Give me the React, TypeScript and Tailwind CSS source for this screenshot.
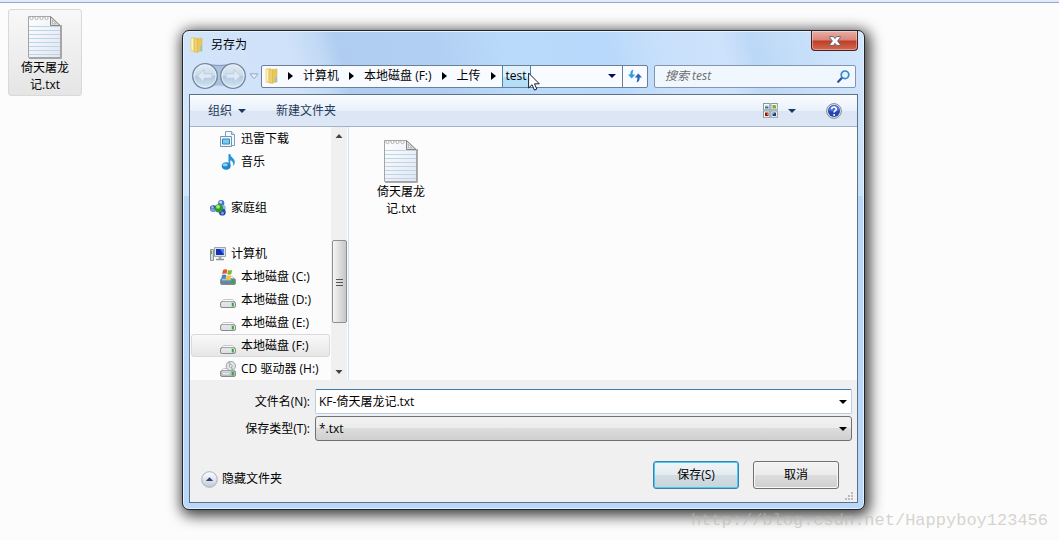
import React, { useState } from 'react';
import clsx from 'clsx';

type IconProps = { className?: string };

const NotepadIcon = ({ className }: IconProps) => (
  <svg viewBox="0 0 34 44" className={className} aria-hidden="true">
    <defs>
      <linearGradient id="paper" x1="0" y1="0" x2="1" y2="1">
        <stop offset="0" stopColor="#ffffff" />
        <stop offset="1" stopColor="#e0e5f3" />
      </linearGradient>
    </defs>
    <path d="M1 43h32V10" fill="none" stroke="#8f8f8f" strokeWidth="1.500" />
    <path d="M.5 1.500h22l10 9.500v31.500H.5z" fill="url(#paper)" stroke="#a4a4a4" />
    {[11.5, 15.5, 19.5, 23.5, 27.5, 31.5, 35.5, 39.5].map(y => (
      <path key={y} d={`M1 ${y}h31`} stroke="#bdd6e6" />
    ))}
    {[3.5, 8.5, 13.5, 18.5].map(x => (
      <circle key={x} cx={x} cy="3" r="1.600" fill="#fff" stroke="#a0a0a0" strokeWidth=".8" />
    ))}
    <path d="M22.500 1.500V10.500H32z" fill="#dcdcdc" stroke="#7d7d7d" strokeWidth=".9" />
    <path d="M24.500 5.500v3.200h3.300z" fill="#fff" stroke="#8b8b8b" strokeWidth=".5" />
  </svg>
);

const FolderIcon = ({ className }: IconProps) => (
  <svg viewBox="0 0 16 16" className={className} aria-hidden="true">
    <path d="M8 1.500l5-.5v13l-5 1z" fill="#e8c75c" stroke="#dcbb58" strokeWidth=".6" />
    <path d="M2 1l5-.5V15l-5-1z" fill="#f8e694" stroke="#e0c463" strokeWidth=".6" />
    <path d="M5 1.500L8.500 2v13.500l-3.500-1z" fill="#edd070" stroke="#d9b64e" strokeWidth=".6" />
    <path d="M3.200 2v11" stroke="#fffbd9" />
    <path d="M11.500 9h1.500v5h-1.500z" fill="#7cc5ee" />
  </svg>
);

const DownloadsIcon = ({ className }: IconProps) => (
  <svg viewBox="0 0 16 16" className={className} aria-hidden="true">
    <path d="M5.500.5h6l3 3v11h-9z" fill="#f4f9fd" stroke="#7e9fb9" />
    <path d="M11.500.5v3h3" fill="#d6e6f2" stroke="#7e9fb9" />
    <path d="M.5 5.500h11v10H.5z" fill="#eef6fc" stroke="#7397b3" />
    <path d="M2.500 8h7v5h-7z" fill="#7cc8f0" stroke="#2f86bd" />
  </svg>
);

const MusicIcon = ({ className }: IconProps) => (
  <svg viewBox="0 0 16 16" className={className} aria-hidden="true">
    <path d="M8.500 0h1.800c0 3.200 4.500 4.200 4.500 8 0 2-.8 3-1.600 4 .6-3.200-.6-5-2.900-5.800V12H8.500z" fill="#2794d9" />
    <ellipse cx="6.200" cy="12" rx="4.500" ry="3.800" fill="#1f86cb" />
    <ellipse cx="5.200" cy="10.800" rx="2.600" ry="1.600" fill="#84d4f7" />
  </svg>
);

const HomegroupIcon = ({ className }: IconProps) => (
  <svg viewBox="0 0 16 16" className={className} aria-hidden="true">
    <circle cx="11.200" cy="3.200" r="3.100" fill="#4a77ca" />
    <circle cx="3.300" cy="8.500" r="3.300" fill="#2c4cb4" />
    <circle cx="12.800" cy="8" r="3" fill="#8ab8e8" />
    <circle cx="12.300" cy="12.200" r="3.400" fill="#2b49ad" />
    <path d="M0 8.500a3.300 3.300 0 0 0 6.600 0z" fill="#7f9be0" />
    <circle cx="8.800" cy="8.200" r="4.200" fill="#2c9a2a" />
    <circle cx="8" cy="6.800" r="2" fill="#a5e67c" />
    <circle cx="10.700" cy="2.200" r="1.300" fill="#c9e0fa" />
    <circle cx="2.500" cy="7.300" r="1.200" fill="#a9c1f2" />
    <circle cx="12.500" cy="13.200" r="1.400" fill="#7d9df0" />
  </svg>
);

const ComputerIcon = ({ className }: IconProps) => (
  <svg viewBox="0 0 16 16" className={className} aria-hidden="true">
    <path d="M.5 3.500h3v11h-3z" fill="#d5d8da" stroke="#8d9396" />
    <path d="M1.500 5v3" stroke="#3fae3a" />
    <path d="M4.500 1.500h11v9h-11z" fill="#dfe2e6" stroke="#a0a5ab" />
    <path d="M6 3h8v6H6z" fill="#1230b8" />
    <path d="M10 3h4v6z" fill="#4c86ea" />
    <path d="M8.500 11h3v2h-3z" fill="#a9aeb2" />
    <path d="M6 13.500h8" stroke="#8f9599" strokeWidth="1.500" />
  </svg>
);

const DriveBody = ({ color = '#dfe1e6' }: { color?: string }) => (
  <>
    <path d="M3.500 7.500h9l3 3H.5z" fill="#fafafb" stroke="#b9bbbf" strokeWidth=".8" />
    <rect x=".5" y="9.800" width="15" height="5.700" rx="1.600" fill={color} stroke="#85888d" />
    <path d="M2 10.800h9" stroke="#fff" strokeOpacity=".7" />
    <path d="M12.800 11v3.500" stroke="#2fae2b" strokeWidth="2" />
  </>
);

const DriveIcon = ({ className }: IconProps) => (
  <svg viewBox="0 0 16 16" className={className} aria-hidden="true">
    <DriveBody />
  </svg>
);

const SystemDriveIcon = ({ className }: IconProps) => (
  <svg viewBox="0 0 16 16" className={className} aria-hidden="true">
    <DriveBody color="#5f8b9b" />
    <path d="M3 1C4.500-.2 6 0 7.300.7L6.500 5C5.200 4.300 3.700 4.400 2.200 5.200z" fill="#e8552a" />
    <path d="M8 1c1.300.7 2.800.6 4.200-.2L11.300 5c-1.400.9-2.700 1-4 .3z" fill="#7ab929" />
    <path d="M2 6c1.500-.8 3-.8 4.300-.1L5.500 10c-1.300-.7-2.800-.6-4.200.2z" fill="#3a87d8" />
    <path d="M7 6.200c1.300.7 2.600.6 4-.2l-.8 4.200c-1.400.8-2.800.9-4 .2z" fill="#f7c32c" />
  </svg>
);

const CdDriveIcon = ({ className }: IconProps) => (
  <svg viewBox="0 0 16 16" className={className} aria-hidden="true">
    <DriveBody color="#b9bcc1" />
    <path d="M2.500 12.800h7" stroke="#fff" />
    <circle cx="10.800" cy="5" r="4.700" fill="#e1e4e8" stroke="#8b9095" strokeWidth=".8" />
    <path d="M10.800 5L7.500 1.800A4.300 4.300 0 0 1 10.300.8zM10.800 5l3 3.200a4.300 4.300 0 0 1-2.500 1z" fill="#9fc7b1" />
    <circle cx="10.800" cy="5" r="1.400" fill="#fff" stroke="#777" strokeWidth=".6" />
  </svg>
);

const CaretRight = () => (
  <svg viewBox="0 0 5 8" className="h-2 w-[5px]" aria-hidden="true">
    <path d="M0 0l5 4-5 4z" fill="#000" />
  </svg>
);

const CaretDown = ({ className }: IconProps) => (
  <svg viewBox="0 0 8 4" className={clsx('h-1 w-2', className)} aria-hidden="true">
    <path d="M0 0h8L4 4z" fill="currentColor" />
  </svg>
);

const ScrollCaret = ({ up }: { up?: boolean }) => (
  <svg viewBox="0 0 8 4" className="h-1 w-2" aria-hidden="true">
    <path d={up ? 'M.5 4h7L4 0z' : 'M.5 0h7L4 4z'} fill="#444" />
  </svg>
);

const NavArrows = () => (
  <svg viewBox="0 0 58 28" className="h-7 w-[58px]" aria-hidden="true">
    <defs>
      <linearGradient id="orb" x1="0" y1="0" x2="0" y2="1">
        <stop offset="0" stopColor="#e2ecf6" />
        <stop offset=".48" stopColor="#cbdbea" />
        <stop offset=".52" stopColor="#b3c9df" />
        <stop offset="1" stopColor="#d7e8f8" />
      </linearGradient>
    </defs>
    <path d="M16 1.500q14 4 28 0v25q-14-6-28 0z" fill="#a9c2dd" />
    <path d="M16 1.500q14 4 28 0" fill="none" stroke="#8297ae" />
    {[16, 44].map(x => (
      <g key={x}>
        <circle cx={x} cy="14" r="12.300" fill="url(#orb)" stroke="#74879c" strokeWidth="1.300" />
        <circle cx={x} cy="14" r="11" fill="none" stroke="#eaf2fa" strokeOpacity=".8" />
      </g>
    ))}
    <path d="M8.500 14l6.500-6.500v4.300h8v4.400h-8v4.300z" fill="#dfe9f4" stroke="#b3c6da" strokeWidth=".8" />
    <path d="M51.500 14L45 7.500v4.300h-8v4.400h8v4.300z" fill="#dfe9f4" stroke="#b3c6da" strokeWidth=".8" />
  </svg>
);

const RecentCaret = () => (
  <svg viewBox="0 0 10 7" className="h-[7px] w-2.5" aria-hidden="true">
    <path d="M1 .8h8L5 5.800z" fill="#e3eefa" stroke="#93a9c4" />
  </svg>
);

const RefreshIcon = () => (
  <svg viewBox="0 0 14 14" className="size-3.5" aria-hidden="true">
    <path d="M5.500.5C3 1.200 2.300 3 2.300 5.500H0L3.700 9.500 7.300 5.500H4.600c0-1.800.2-3.500.9-5z" fill="#2b9fe0" />
    <path d="M8.500 13.500c2.500-.7 3.200-2.500 3.200-5H14L10.300 4.500 6.700 8.500h2.700c0 1.800-.2 3.500-.9 5z" fill="#2b62b8" />
  </svg>
);

const SearchIcon = () => (
  <svg viewBox="0 0 13 13" className="size-[13px]" aria-hidden="true">
    <path d="M1.200 11.800l4-4.300" stroke="#2a4f9e" strokeWidth="2.200" strokeLinecap="round" />
    <circle cx="8" cy="4.800" r="3.800" fill="#e3f3fd" stroke="#3a86c8" strokeWidth="1.700" />
  </svg>
);

const ViewIcon = () => (
  <svg viewBox="0 0 15 15" className="size-[15px]" aria-hidden="true">
    {[0.5, 8].map(x => [0.5, 8].map(y => (
      <rect key={`${x}-${y}`} x={x} y={y} width="6.300" height="6.300" fill="#fff" stroke="#8c97a5" />
    )))}
    <path d="M2 2h3.500v1.500H2z" fill="#b9dcf7" />
    <path d="M2 3.500h3.500v2H2z" fill="#27824a" />
    <path d="M9.500 2H13v3.500H9.500z" fill="#5cb831" />
    <path d="M11.500 2H13v1.800h-1.500z" fill="#f0a022" />
    <path d="M2 9.500h3.500V13H2z" fill="#8e1712" />
    <path d="M4 10.500h1.500V12H4z" fill="#f0a022" />
    <path d="M9.500 9.500H13V13H9.500z" fill="#1c3f78" />
    <path d="M9.500 9.500h1.700v1.500H9.500z" fill="#7fb2e3" />
  </svg>
);

const HelpIcon = () => (
  <svg viewBox="0 0 16 16" className="size-4" aria-hidden="true">
    <circle cx="8" cy="8" r="7.400" fill="#dfe3ea" stroke="#858c97" />
    <circle cx="8" cy="8" r="6" fill="#2546ae" />
    <path d="M2.500 7.500a5.500 5.500 0 0 1 11 0q-5.500 2-11 0z" fill="#5272cf" />
    <path d="M5.700 6.300C5.700 3.200 10.400 3.400 10.300 6.100 10.200 7.700 8.100 7.600 8.100 9.600" fill="none" stroke="#fff" strokeWidth="1.600" />
    <circle cx="8.100" cy="11.900" r="1" fill="#fff" />
  </svg>
);

const CollapseIcon = () => (
  <svg viewBox="0 0 17 17" className="size-[17px]" aria-hidden="true">
    <defs>
      <linearGradient id="collapse" x1="0" y1="0" x2="0" y2="1">
        <stop offset="0" stopColor="#ffffff" />
        <stop offset="1" stopColor="#c5c9d2" />
      </linearGradient>
    </defs>
    <circle cx="8.500" cy="8.500" r="7.800" fill="url(#collapse)" stroke="#a3aed0" />
    <path d="M4.800 10h7.400L8.500 6.300z" fill="#2a4188" />
  </svg>
);

const CloseGlyph = () => (
  <svg viewBox="0 0 12 10" className="h-2.5 w-3" aria-hidden="true">
    <path
      d="M.8.6h3.700L6 2.600 7.500.6h3.700v1.200L8.600 5l2.600 3.200v1.200H7.500L6 7.400 4.500 9.400H.8V8.200L3.400 5 .8 1.800z"
      fill="#fff"
      stroke="#565a66"
      strokeWidth=".9"
    />
  </svg>
);

const Cursor = ({ className }: IconProps) => (
  <svg viewBox="0 0 12 19" className={className} aria-hidden="true">
    <path d="M.6 1v15l3.500-3.300 2.300 5.400 2.400-1-2.300-5.300h4.800z" fill="#fff" stroke="#1d1d33" />
  </svg>
);

const FileItem = ({ selected }: { selected?: boolean }) => (
  <button
    className={clsx(
      'flex h-[87px] w-[74px] flex-col items-center rounded-[3px] border pt-[5px]',
      selected ? 'border-[#d9d9d9] bg-gradient-to-b from-[#f8f8f8] to-[#e5e5e5]' : 'border-transparent'
    )}
  >
    <NotepadIcon className="h-11 w-[34px]" />
    <span className="w-[50px] text-center leading-[17px]">倚天屠龙记.txt</span>
  </button>
);

const places = [
  { name: '迅雷下载', icon: DownloadsIcon, nested: true },
  { name: '音乐', icon: MusicIcon, nested: true },
  { name: '家庭组', icon: HomegroupIcon, gap: true },
  { name: '计算机', icon: ComputerIcon, gap: true },
  { name: '本地磁盘 (C:)', icon: SystemDriveIcon, nested: true },
  { name: '本地磁盘 (D:)', icon: DriveIcon, nested: true },
  { name: '本地磁盘 (E:)', icon: DriveIcon, nested: true },
  { name: '本地磁盘 (F:)', icon: DriveIcon, nested: true },
  { name: 'CD 驱动器 (H:)', icon: CdDriveIcon, nested: true },
];

const crumbs = ['计算机', '本地磁盘 (F:)', '上传'];

export default function App() {
  const [place, setPlace] = useState('本地磁盘 (F:)');
  const [fileName, setFileName] = useState('KF-倚天屠龙记.txt');

  return (
    <div className="relative min-h-screen overflow-hidden bg-[#fcfcfc] font-['Open_Sans','Noto_Sans_CJK_SC',sans-serif] text-xs text-black">
      <div className="h-[3px] border-b border-[#94abcb] bg-[#dfeafa]" />

      {/* Desktop file */}
      <div className="absolute top-[9px] left-2">
        <FileItem selected />
      </div>

      {/* Save dialog */}
      <main className="pt-[27px] pr-[194px] pb-[30px] pl-[182px]">
        <section
          aria-label="另存为"
          className="rounded-[7px] border border-[#20262e] bg-[#b9d7f9] bg-[linear-gradient(75deg,#d3e5fa_0%,#cfe2f9_20%,#c3daf5_24%,#aecdf0_27%,#b0cff2_40%,#badafb_50%,#b8d9fb_64%,#c9e0fb_72%,#cde2fb_80%,#bcd8f7_84%,#d3e7fc_100%)] bg-[length:100%_165px] bg-no-repeat px-[6px] pb-[6px] shadow-[inset_0_0_0_1px_#e4f2ff,2px_3px_14px_3px_rgba(0,0,0,0.75)]"
        >
          {/* Title bar */}
          <header className="flex h-[27px] items-center gap-1.5">
            <FolderIcon className="size-4" />
            <h1>另存为</h1>
            <button
              aria-label="关闭"
              className="ml-auto flex h-5 w-[47px] items-center justify-center self-start rounded-b-[4px] border border-t-0 border-[#4e1d1d] bg-[linear-gradient(#e9b0a6_0%,#d98477_48%,#c03c26_52%,#d4694f_100%)] shadow-[inset_0_0_0_1px_rgba(255,255,255,0.35)]"
            >
              <CloseGlyph />
            </button>
          </header>

          {/* Address and search */}
          <div className="flex h-9 items-center pr-0.5">
            <NavArrows />
            <button aria-label="最近浏览的位置" className="mx-0.5">
              <RecentCaret />
            </button>
            <nav className="relative flex h-[23px] flex-1 items-stretch rounded-[2px] border border-[#6b7f96] bg-[#f8fbff]">
              <FolderIcon className="mx-0.5 size-4 self-center" />
              <span className="flex w-[17px] items-center justify-center"><CaretRight /></span>
              {crumbs.map(name => (
                <React.Fragment key={name}>
                  <button className="px-1">{name}</button>
                  <span className="flex w-[17px] items-center justify-center"><CaretRight /></span>
                </React.Fragment>
              ))}
              <button className="border-x border-[#4585b0] bg-gradient-to-b from-[#e0f1fb] from-50% to-[#b5dff6] to-50% px-[3px]">
                test
              </button>
              <button aria-label="历史记录" className="mr-1.5 ml-auto text-[#0a0a5c]">
                <CaretDown />
              </button>
              <button aria-label="刷新" className="flex w-[25px] items-center justify-center border-l border-[#6b7f96]">
                <RefreshIcon />
              </button>
              <Cursor className="absolute top-1.5 left-[266px] h-[19px] w-3" />
            </nav>
            <label className="ml-1.5 flex h-[23px] w-[202px] items-center rounded-[2px] border border-[#8496ab] bg-[#f1f7fe] pr-[5px] pl-2.5">
              <input
                aria-label="搜索"
                placeholder="搜索 test"
                className="min-w-0 flex-1 bg-transparent italic outline-none placeholder:text-[#6d6d6d]"
              />
              <SearchIcon />
            </label>
          </div>

          <div className="border border-[#5d7085] bg-[#fcfcfc]">
            {/* Toolbar */}
            <div className="flex h-8 items-center border-b border-[#a3b2c7] bg-[linear-gradient(#fbfdff_0%,#e8f1fa_50%,#dbe5f3_50%,#dde7f5_100%)] pr-[15px] pl-[18px] text-[#1e395b]">
              <button className="flex items-center gap-1.5">
                组织
                <CaretDown />
              </button>
              <button className="ml-[30px]">新建文件夹</button>
              <button aria-label="更改视图" className="ml-auto flex items-center gap-2.5">
                <ViewIcon />
                <CaretDown />
              </button>
              <button aria-label="帮助" className="ml-[30px]">
                <HelpIcon />
              </button>
            </div>

            <div className="flex">
              {/* Places */}
              <ul className="w-[141px]">
                {places.map(({ name, icon: Icon, nested, gap }) => (
                  <li key={name} className={clsx('px-px', gap && 'pt-[23px]')}>
                    <button
                      onClick={() => setPlace(name)}
                      className={clsx(
                        'flex h-[23px] w-full items-center gap-[5px] rounded-[3px] border whitespace-nowrap',
                        nested ? 'pl-7' : 'pl-[18px]',
                        name === place
                          ? 'border-[#d9d9d9] bg-gradient-to-b from-[#f9f9f9] to-[#e6e6e6]'
                          : 'border-transparent'
                      )}
                    >
                      <Icon className="size-4 shrink-0" />
                      {name}
                    </button>
                  </li>
                ))}
              </ul>

              {/* Scrollbar */}
              <div className="flex w-4 flex-col items-center bg-[#f0f0f0]">
                <span className="flex h-[17px] items-center"><ScrollCaret up /></span>
                <div className="mt-24 flex h-[83px] w-[15px] flex-col items-center justify-center gap-px rounded-[2px] border border-[#8f8f8f] bg-gradient-to-r from-[#f6f6f6] to-[#c6c6c6]">
                  <span className="h-0.5 w-[7px] border-b border-[#555]" />
                  <span className="h-0.5 w-[7px] border-b border-[#555]" />
                  <span className="h-0.5 w-[7px] border-b border-[#555]" />
                </div>
                <span className="mt-auto flex h-[17px] items-center"><ScrollCaret /></span>
              </div>

              {/* Folder content */}
              <div className="ml-px flex-1 border-l border-[#cfe0f2] pt-1.5 pl-[15px]">
                <FileItem />
              </div>
            </div>

            {/* Footer */}
            <form className="relative bg-[#f0f0f0] pt-[9px] pb-[13px]" onSubmit={e => e.preventDefault()}>
              <div className="grid grid-cols-[120px_1fr] items-center gap-x-[5px] gap-y-0.5 pr-[5px]">
                <label htmlFor="file-name" className="text-right">文件名(N):</label>
                <div className="flex h-[25px] items-center rounded-[2px] border border-[#b5cfe7] border-t-[#3d7bad] bg-white pr-1">
                  <input
                    id="file-name"
                    value={fileName}
                    onChange={e => setFileName(e.target.value)}
                    className="min-w-0 flex-1 bg-transparent pl-[3px] outline-none"
                  />
                  <CaretDown />
                </div>
                <label htmlFor="file-type" className="text-right">保存类型(T):</label>
                <div className="flex h-[25px] items-center rounded-[3px] border border-[#707070] bg-[linear-gradient(#f2f2f2_0%,#ebebeb_50%,#dddddd_50%,#cfcfcf_100%)] pr-1">
                  <select id="file-type" className="min-w-0 flex-1 appearance-none pl-[3px] outline-none">
                    <option>*.txt</option>
                  </select>
                  <CaretDown />
                </div>
              </div>

              <div className="mt-5 flex h-7 items-center gap-3.5 pr-[18px] pl-[11px]">
                <button type="button" className="mt-2 mr-auto flex items-center gap-1">
                  <CollapseIcon />
                  隐藏文件夹
                </button>
                <button
                  type="submit"
                  className="h-7 w-[86px] rounded-[3px] border border-[#3c7fb1] bg-[linear-gradient(#f0f4f7_0%,#e4ebf0_50%,#d2dde4_50%,#cbd3d9_100%)] shadow-[inset_0_0_0_1px_#42cdf3]"
                >
                  保存(S)
                </button>
                <button
                  type="button"
                  className="h-7 w-[86px] rounded-[3px] border border-[#707070] bg-[linear-gradient(#f2f2f2_0%,#ebebeb_50%,#dddddd_50%,#cfcfcf_100%)] shadow-[inset_0_0_0_1px_#f8f8f8]"
                >
                  取消
                </button>
              </div>

              <svg viewBox="0 0 9 9" className="absolute right-1 bottom-0.5 size-[9px]" aria-hidden="true">
                <path d="M7 1h2v2H7zM4 4h2v2H4zM7 4h2v2H7zM1 7h2v2H1zM4 7h2v2H4zM7 7h2v2H7z" fill="#bcbcbc" />
              </svg>
            </form>
          </div>
        </section>
      </main>

      <p className="absolute right-[11px] bottom-[7px] font-['Liberation_Mono',monospace] text-[17px] text-[#b9b9ae]/60">
        http://blog.csdn.net/Happyboy123456
      </p>
    </div>
  );
}
